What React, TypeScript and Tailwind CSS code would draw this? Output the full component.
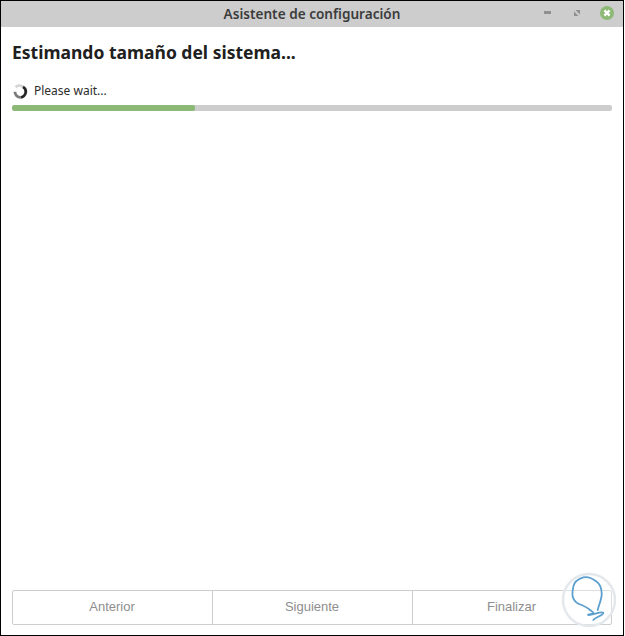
export default function App() {
  return (
    <div className="w-[625px] h-[636px] bg-white font-['Noto_Sans',sans-serif] relative overflow-hidden">
      <div className="w-[624px] h-[636px] border border-black flex flex-col bg-white">
        <div className="h-[26px] bg-[#cdcdcd] flex items-center relative shrink-0">
          <div className="w-full text-center text-[13.6px] font-semibold text-[#3c3c3c] leading-[15px] pb-[2px]">Asistente de configuración</div>
          <div className="absolute left-[543px] top-[10px] w-[7px] h-[3px] bg-[#8f8f8f]" />
          <svg className="absolute left-[573px] top-[9px]" width="6" height="6" viewBox="0 0 6 6">
            <path d="M1.5 0H6V4.5zM0 1.5L4.5 6H0z" fill="#8f8f8f" />
          </svg>
          <svg className="absolute left-[599px] top-[5px]" width="15" height="15" viewBox="0 0 15 15">
            <circle cx="7" cy="7" r="7" fill="#8cb975" />
            <path d="M4.4 4.4l5.2 5.2M9.6 4.4l-5.2 5.2" stroke="#fff" strokeWidth="2.4" />
          </svg>
        </div>
        <div className="flex-1 flex flex-col px-[11px]">
          <div className="mt-[13px] text-[17.5px] leading-[25px] font-bold text-[#202020]">Estimando tamaño del sistema...</div>
          <div className="mt-[16px] flex items-center gap-[6px] h-[20px]">
            <svg width="16" height="16" viewBox="0 0 16 16" fill="none">
              <path d="M3.6 4.2A5.6 5.6 0 0 1 11 3.9" stroke="#d4d4d4" strokeWidth="2.8" />
              <path d="M11 3.9A5.6 5.6 0 0 1 8.5 14.3" stroke="#262626" strokeWidth="2.8" />
              <path d="M8.5 14.3A5.6 5.6 0 0 1 2.9 8.7" stroke="#7a7a7a" strokeWidth="2.8" />
            </svg>
            <span className="text-[12px] text-[#2c2c2c] leading-none">Please wait...</span>
          </div>
          <div className="mt-[4px] h-[6px] w-[600px] rounded-[2px] bg-[#cdcdcd] overflow-hidden">
            <div className="h-full w-[183px] rounded-[2px] bg-[#8cb975]" />
          </div>
          <div className="flex-1" />
          <div className="mb-[10px] h-[35px] w-[600px] flex border border-[#cdcdcd] rounded-[2px] font-['Liberation_Sans',sans-serif] text-[13px] text-[#8e8e8e]">
            <div className="w-[200px] flex items-center justify-center border-r border-[#cdcdcd] pb-[1px] pr-[1px]">Anterior</div>
            <div className="w-[200px] flex items-center justify-center border-r border-[#cdcdcd] pb-[1px] pr-[1px]">Siguiente</div>
            <div className="flex-1 flex items-center justify-center pb-[1px] pr-[1px]">Finalizar</div>
          </div>
        </div>
      </div>
      <svg className="absolute left-[561px] top-[572px]" width="56" height="57" viewBox="0 0 56 57" fill="none">
        <circle cx="28" cy="28" r="26" fill="#ffffff" fillOpacity="0.35" stroke="#e4e8ec" strokeWidth="2.5" />
        <path d="M36.7 38C38 32 41 27 40.7 21.3C40.4 15 39 12 35.7 9.7C31 6 26 4.5 22.3 5.3C17 7 13 10 12.3 14.7C11.5 19 10.5 23 12.3 26.3C14 30 17 32 20.7 33C24 34.5 27 36 29 38C31 39.5 33 40.5 32 41.3C30 42.5 26 42.5 27.3 43C31 43.5 40 39 42.3 40.7C43 43 35 45 32.3 48" stroke="#5b9fcf" strokeWidth="1.8" strokeLinecap="round" strokeLinejoin="round" />
      </svg>
    </div>
  );
}
